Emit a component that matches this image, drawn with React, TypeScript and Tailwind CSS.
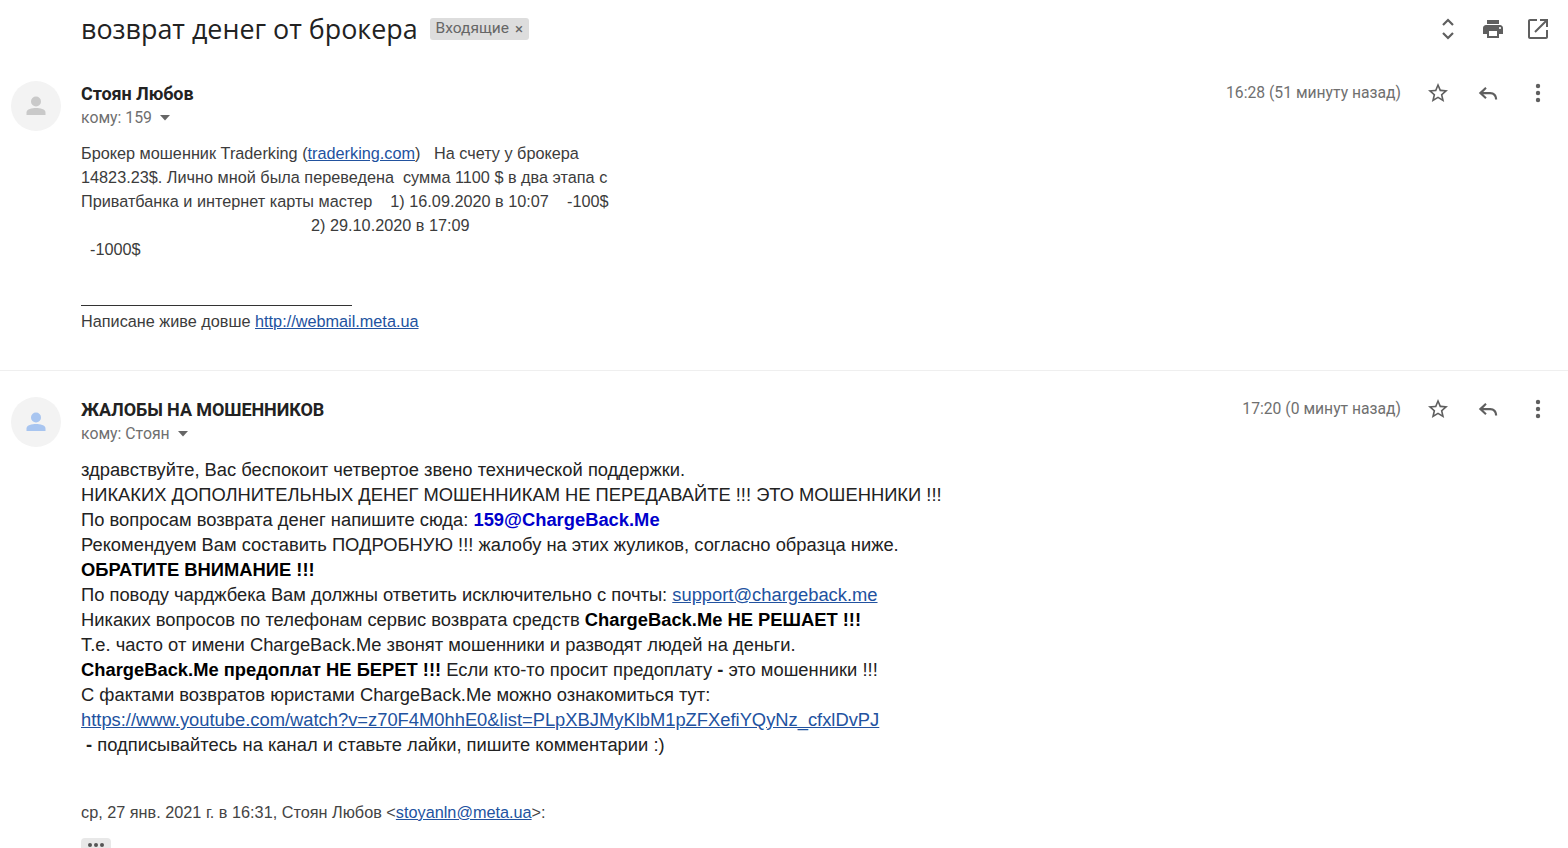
import React from "react";

const Link = ({ children }: { children: React.ReactNode }) => (
  <a className="text-[#22529f] underline">{children}</a>
);

const Avatar = ({ color }: { color: string }) => (
  <div className="w-[50px] h-[50px] rounded-full bg-[#f3f3f3] flex items-center justify-center shrink-0">
    <svg width="26" height="26" viewBox="0 0 26 26" fill={color}>
      <circle cx="13" cy="8.5" r="5" />
      <path d="M3.5 22v-2.5C3.500 16 9 15 13 15s9.500 1 9.500 4.500V22z" />
    </svg>
  </div>
);

const Star = () => (
  <svg width="24" height="24" viewBox="0 0 24 24" fill="#5f5f5f">
    <path d="M22 9.240l-7.190-.620L12 2 9.190 8.630 2 9.240l5.460 4.730L5.820 21 12 17.270 18.180 21l-1.630-7.030L22 9.240zM12 15.400l-3.760 2.270 1-4.280-3.320-2.880 4.380-.380L12 6.100l1.710 4.040 4.380.380-3.320 2.880 1 4.280L12 15.400z" />
  </svg>
);
const Reply = () => (
  <svg width="26" height="26" viewBox="0 0 24 24" fill="#5f5f5f">
    <path d="M9.500 6.500 3.500 12l6 5.500 1.300-1.400-3.200-3H14c2.900 0 4.500 1.800 4.500 5h2c0-4.400-2.600-7-6.500-7H7.600l3.200-3.200z" />
  </svg>
);
const Dots = () => (
  <svg width="24" height="24" viewBox="0 0 24 24" fill="#5f5f5f">
    <circle cx="12" cy="5" r="2.200" />
    <circle cx="12" cy="12" r="2.200" />
    <circle cx="12" cy="19" r="2.200" />
  </svg>
);
const Caret = () => (
  <svg width="12" height="6" viewBox="0 0 12 6" fill="#666666" className="ml-[7px]">
    <path d="M1 0h10L6 5.500z" />
  </svg>
);

const MessageHead = ({
  name,
  to,
  time,
  avatar,
}: {
  name: string;
  to: string;
  time: string;
  avatar: string;
}) => (
  <div className="flex">
    <div className="w-[81px] pl-[11px] shrink-0">
      <Avatar color={avatar} />
    </div>
    <div className="flex-1 pt-[1px]">
      <div className="text-[18px] leading-[24px] font-bold text-[#222222] font-['Roboto',sans-serif] tracking-[-0.09px]">{name}</div>
      <div className="flex items-center text-[15.800px] leading-[22px] text-[#6f6f6f] font-['Roboto',sans-serif] mt-[1px]">
        {to}
        <Caret />
      </div>
    </div>
    <div className="flex items-start pr-[18px]">
      <div className="text-[15.700px] leading-[22px] text-[#6f6f6f] font-['Roboto',sans-serif] mr-[25px] pt-[1px]">{time}</div>
      <div className="flex items-center h-[24px]">
        <Star />
        <div className="ml-[25px]"><Reply /></div>
        <div className="ml-[25px]"><Dots /></div>
      </div>
    </div>
  </div>
);

export default function App() {
  return (
    <div className="w-[1568px] h-[848px] overflow-hidden bg-white font-['Liberation_Sans',sans-serif]">
      <div className="h-[58px] flex items-center pl-[81px] pr-[18px]">
        <div className="text-[26.850px] text-[#222222] font-['Open_Sans',sans-serif] leading-[32px]">возврат денег от брокера</div>
        <div className="ml-[12px] h-[22px] px-[6px] bg-[#dddddd] rounded-[3px] flex items-center gap-[6px] text-[15.500px] text-[#666666] font-['Roboto',sans-serif]">
          Входящие
          <span className="text-[15px] leading-none">×</span>
        </div>
        <div className="ml-auto flex items-center gap-[21px]">
          <svg width="24" height="26" viewBox="0 0 24 26" fill="none" stroke="#5f5f5f" strokeWidth="2.200">
            <path d="M7 9l5-5 5 5M7 17l5 5 5-5" />
          </svg>
          <svg width="24" height="24" viewBox="0 0 24 24" fill="#5f5f5f">
            <path d="M19 8H5c-1.660 0-3 1.340-3 3v6h4v4h12v-4h4v-6c0-1.660-1.340-3-3-3zm-3 11H8v-5h8v5zm3-7c-.550 0-1-.450-1-1s.450-1 1-1 1 .450 1 1-.450 1-1 1zm-1-9H6v4h12V3z" />
          </svg>
          <svg width="24" height="24" viewBox="0 0 24 24" fill="#5f5f5f">
            <path d="M20 20H4V4h7V2H4c-1.100 0-2 .900-2 2v16c0 1.100.900 2 2 2h16c1.100 0 2-.900 2-2v-7h-2v7zM14 2v2h4.600L8.300 14.300l1.400 1.400L20 5.400V10h2V2h-8z" />
          </svg>
        </div>
      </div>

      <div className="pt-[23px] pb-[37px] border-b border-[#efefef]">
        <MessageHead name="Стоян Любов" to="кому: 159" time="16:28 (51 минуту назад)" avatar="#c9c9c9" />
        <div className="mt-[10px] pl-[81px] text-[16.250px] leading-[24px] text-[#3c3c3c] whitespace-pre">
          <div>Брокер мошенник Traderking (<Link>traderking.com</Link>)   На счету у брокера</div>
          <div>14823.23$. Лично мной была переведена  сумма 1100 $ в два этапа с</div>
          <div>Приватбанка и интернет карты мастер    1) 16.09.2020 в 10:07    -100$</div>
          <div className="pl-[230px]">2) 29.10.2020 в 17:09</div>
          <div className="pl-[9px]">-1000$</div>
          <div className="h-[24px]" />
          <div className="h-[24px] flex items-end"><div className="w-[271px] border-b border-[#333333] mb-[3px]" /></div>
          <div>Написане живе довше <Link>http://webmail.meta.ua</Link></div>
        </div>
      </div>

      <div className="pt-[26px]">
        <MessageHead name="ЖАЛОБЫ НА МОШЕННИКОВ" to="кому: Стоян" time="17:20 (0 минут назад)" avatar="#a8c5f0" />
        <div className="mt-[10px] pl-[81px] text-[18.350px] leading-[25px] text-[#222222] whitespace-pre">
          <div>здравствуйте, Вас беспокоит четвертое звено технической поддержки.</div>
          <div>НИКАКИХ ДОПОЛНИТЕЛЬНЫХ ДЕНЕГ МОШЕННИКАМ НЕ ПЕРЕДАВАЙТЕ !!! ЭТО МОШЕННИКИ !!!</div>
          <div>По вопросам возврата денег напишите сюда: <b className="text-[#0000cc]">159@ChargeBack.Me</b></div>
          <div>Рекомендуем Вам составить ПОДРОБНУЮ !!! жалобу на этих жуликов, согласно образца ниже.</div>
          <div><b className="text-black">ОБРАТИТЕ ВНИМАНИЕ !!!</b></div>
          <div>По поводу чарджбека Вам должны ответить исключительно с почты: <Link>support@chargeback.me</Link></div>
          <div>Никаких вопросов по телефонам сервис возврата средств <b className="text-black">ChargeBack.Me НЕ РЕШАЕТ !!!</b></div>
          <div>Т.е. часто от имени ChargeBack.Me звонят мошенники и разводят людей на деньги.</div>
          <div><b className="text-black">ChargeBack.Me предоплат НЕ БЕРЕТ !!!</b> Если кто-то просит предоплату <b>-</b> это мошенники !!!</div>
          <div>С фактами возвратов юристами ChargeBack.Me можно ознакомиться тут:</div>
          <div><Link>https://www.youtube.com/watch?v=z70F4M0hhE0&amp;list=PLpXBJMyKlbM1pZFXefiYQyNz_cfxlDvPJ</Link></div>
          <div> <b>-</b> подписывайтесь на канал и ставьте лайки, пишите комментарии :)</div>
        </div>
        <div className="mt-[43px] pl-[81px] text-[16.250px] leading-[24px] text-[#444444]">
          ср, 27 янв. 2021 г. в 16:31, Стоян Любов &lt;<Link>stoyanln@meta.ua</Link>&gt;:
        </div>
        <div className="ml-[81px] mt-[14px] w-[30px] h-[14px] bg-[#e8e8e8] rounded-[4px] flex justify-center gap-[2px] pt-[5px]">
          <span className="w-[4px] h-[4px] rounded-full bg-[#555555]" />
          <span className="w-[4px] h-[4px] rounded-full bg-[#555555]" />
          <span className="w-[4px] h-[4px] rounded-full bg-[#555555]" />
        </div>
      </div>
    </div>
  );
}
